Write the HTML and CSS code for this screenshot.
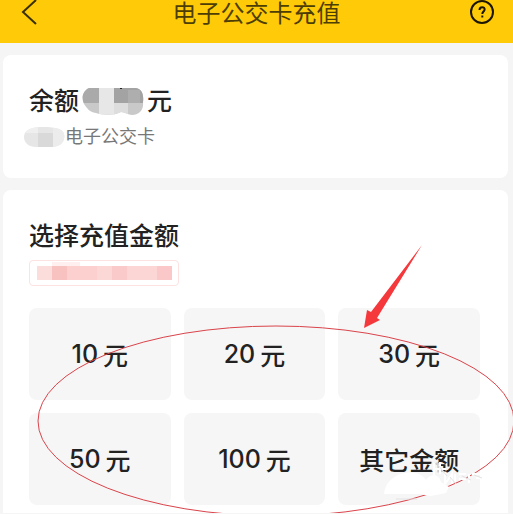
FILE: index.html
```html
<!DOCTYPE html>
<html lang="zh-CN">
<head>
  <meta charset="UTF-8">
  <meta name="viewport" content="width=device-width, initial-scale=1.0">
  <title>电子公交卡充值</title>
  <link rel="stylesheet" href="styles.css">
</head>
<body>
  <header class="header">
    <button class="icon-btn" type="button" aria-label="返回">
      <svg width="26" height="26" viewBox="0 0 26 26" fill="none" stroke="#3a2f00" stroke-width="2">
        <path d="M18 0L5 12L18 24"/>
      </svg>
    </button>
    <h1 class="title">电子公交卡充值</h1>
    <button class="icon-btn" type="button" aria-label="帮助">
      <svg width="26" height="26" viewBox="0 0 26 26" fill="none" stroke="#1c1600" stroke-width="2">
        <circle cx="13" cy="12" r="11"/>
        <path d="M10.5 10C10.5 6.2 16 6.4 15.600 9.600C15.400 11.500 13.300 11.600 13.300 14"/>
        <path d="M13.300 15.500V17.500"/>
      </svg>
    </button>
  </header>

  <main class="main">
    <!-- Balance -->
    <section class="card">
      <h2 class="heading">
        <span>余额</span>
        <svg class="mask" width="62" height="28" viewBox="0 0 62 28" aria-hidden="true">
          <clipPath id="balanceClip">
            <path d="M7 1H54C60 2 62 8 61 15C62 23 57 28 50 28C46 28 43 25 39 25C31 29 20 28 14 26C7 25 5 21 2 17C-1 10 1 4 7 1Z"/>
          </clipPath>
          <g clip-path="url(#balanceClip)">
            <rect width="62" height="28" fill="#c9c9c9"/>
            <rect width="17" height="16" fill="#aaaaaa"/>
            <rect x="17" width="15" height="28" fill="#e7e7e7"/>
            <rect x="32" width="30" height="16" fill="#a3a3a3"/>
            <rect x="46" y="3" width="12" height="13" fill="#aeaeae"/>
            <rect x="32" y="16" width="14" height="12" fill="#dddddd"/>
          </g>
          <path d="M38 1H40V2H38Z" fill="#222222"/>
        </svg>
        <span>元</span>
      </h2>
      <p class="sub">
        <svg class="mask" width="41" height="20" viewBox="0 0 41 20" aria-hidden="true">
          <clipPath id="cityClip">
            <path d="M9 1C17 -1 29 0 35 2C40 4 41 8 40 12C39 17 34 20 27 20H12C5 20 0 16 0 10C0 5 4 2 9 1Z"/>
          </clipPath>
          <g clip-path="url(#cityClip)">
            <rect width="41" height="20" fill="#e6e6e6"/>
            <rect x="14" y="6" width="15" height="14" fill="#d9d9d9"/>
            <rect x="29" width="12" height="20" fill="#ececec"/>
            <rect width="14" height="6" fill="#efefef"/>
          </g>
        </svg>
        <span>电子公交卡</span>
      </p>
    </section>

    <!-- Amounts -->
    <section class="card card-last">
      <h2 class="heading">选择充值金额</h2>
      <div class="tip">
        <svg width="135" height="24" viewBox="0 0 135 24" aria-hidden="true">
          <rect y="5" width="135" height="14" fill="#fbd0cf"/>
          <rect y="5" width="15" height="14" fill="#fbdddc"/>
          <rect x="15" y="5" width="15" height="14" fill="#f8c2c1"/>
          <rect x="60" y="5" width="15" height="14" fill="#fbd8d6"/>
          <rect x="75" y="5" width="15" height="14" fill="#facaca"/>
          <rect x="90" y="5" width="30" height="14" fill="#fcd6d4"/>
          <rect x="120" y="5" width="15" height="14" fill="#fac8c8"/>
          <rect x="15" y="1" width="28" height="4" fill="#fff0ef"/>
        </svg>
      </div>
      <div class="amounts">
        <button class="amount" type="button"><span>10</span><span>元</span></button>
        <button class="amount" type="button"><span>20</span><span>元</span></button>
        <button class="amount" type="button"><span>30</span><span>元</span></button>
        <button class="amount" type="button"><span>50</span><span>元</span></button>
        <button class="amount" type="button"><span>100</span><span>元</span></button>
        <button class="amount" type="button">其它金额</button>
      </div>
    </section>
  </main>

  <!-- Markup drawn over the page -->
  <svg class="marks" viewBox="0 0 513 514" fill="none" aria-hidden="true">
    <ellipse cx="276" cy="421" rx="238" ry="95" stroke="#d9434a" stroke-width="1"/>
    <path d="M422 245L377 318L380 320L364 328L367 310L371 312Z" fill="#f5383c"/>
    <path d="M384 494C385 484 391 478 400 474C410 471 421 472 426 480C431 473 439 474 441 482L449 487L446 493L431 496L420 494Z" fill="#ffffff"/>
    <path d="M430 464L438 461L441 469L447 473L444 478L432 471Z" fill="#f6f6f6" opacity="0.8"/>
    <path d="M434 463V475M440 462V474M433 469H446M445 472V484L452 474V484M455 474V482M459 474H466M459 479H466M469 474V483M472 474H480M476 478H483" stroke="#ffffff" stroke-width="2"/>
    <path d="M438 465L447 476M450 477L456 484M462 476L471 480M474 475L482 478M396 499H417" stroke="#e2e2e2" stroke-width="1"/>
  </svg>
</body>
</html>
```

FILE: styles.css
```css
* {
  box-sizing: border-box;
}
body {
  position: relative;
  margin: 0;
  font-family: Inter, "Noto Sans CJK SC", sans-serif;
  color: #222;
  background-color: #f5f5f5;
}
h1,
h2,
p {
  margin: 0;
}
button {
  padding: 0;
  border: none;
  font-family: inherit;
  color: inherit;
  cursor: pointer;
}
.header {
  display: flex;
  justify-content: space-between;
  align-items: flex-start;
  padding: 0 18px 15px;
  background-color: #ffcb08;
}
.icon-btn {
  height: 26px;
  background: none;
}
.icon-btn svg {
  display: block;
}
.title {
  font-size: 24px;
  font-weight: 400;
  line-height: 28px;
  color: #4d3e05;
}
.main {
  display: flex;
  flex-direction: column;
  gap: 12px;
  padding: 12px 5px 0 3px;
}
.card {
  padding: 28px 28px 26px 26px;
  border-radius: 8px;
  background-color: #fff;
}
.card-last {
  padding-bottom: 8px;
  border-radius: 8px 8px 0 0;
}
.heading {
  display: flex;
  align-items: center;
  gap: 3px;
  font-size: 25px;
  font-weight: 500;
  line-height: 36px;
}
.mask {
  flex: none;
}
.sub {
  display: flex;
  align-items: center;
  margin: 5px 0 2px -5px;
  font-size: 18px;
  line-height: 26px;
  color: #777;
}
.tip {
  width: fit-content;
  margin-top: 6px;
  padding: 0 6px 0 7px;
  border: 1px solid #fce3e2;
  border-radius: 4px;
}
.tip svg {
  display: block;
}
.amounts {
  display: grid;
  grid-template-columns: repeat(3, 1fr);
  gap: 13px;
  margin-top: 22px;
}
.amount {
  display: flex;
  justify-content: center;
  align-items: center;
  gap: 5px;
  height: 92px;
  border-radius: 8px;
  font-size: 25px;
  font-weight: 500;
  background-color: #f6f6f6;
}
.marks {
  position: absolute;
  top: 0;
  left: 0;
  width: 100%;
  pointer-events: none;
}
```
